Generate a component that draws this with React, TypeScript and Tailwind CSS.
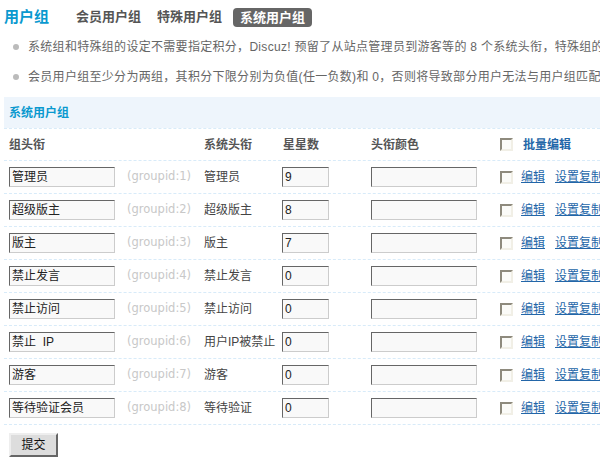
const groups = [
  { title: "管理员", id: 1, sys: "管理员", stars: "9" },
  { title: "超级版主", id: 2, sys: "超级版主", stars: "8" },
  { title: "版主", id: 3, sys: "版主", stars: "7" },
  { title: "禁止发言", id: 4, sys: "禁止发言", stars: "0" },
  { title: "禁止访问", id: 5, sys: "禁止访问", stars: "0" },
  { title: "禁止  IP", id: 6, sys: "用户IP被禁止", stars: "0" },
  { title: "游客", id: 7, sys: "游客", stars: "0" },
  { title: "等待验证会员", id: 8, sys: "等待验证", stars: "0" },
];

const font = "font-['Liberation_Sans','Noto_Sans_CJK_SC',sans-serif]";

function Field({ value, w }: { value: string; w: string }) {
  return (
    <div
      className={`${w} h-[20px] border border-t-[#666] border-l-[#666] border-r-[#ccc] border-b-[#ccc] bg-[#f9f9f9] pl-[2px] text-[12px] leading-[18px] text-[#222] whitespace-pre`}
    >
      {value}
    </div>
  );
}

function Check() {
  return (
    <div className="w-[13px] h-[13px] border-2 border-t-[#8e8a7d] border-l-[#8e8a7d] border-r-[#f1efe6] border-b-[#f1efe6] bg-[#fbfbf8]" />
  );
}

export default function App() {
  return (
    <div className={`w-[600px] h-[460px] overflow-hidden bg-white ${font} whitespace-nowrap`}>
      {/* title + tabs */}
      <div className="flex items-center h-[34px] pl-[4px]">
        <h1 className="text-[15px] font-bold text-[#0a99cf] w-[72px]">用户组</h1>
        <div className="flex items-center gap-[16px] text-[13px] font-bold text-[#555]">
          <span>会员用户组</span>
          <span>特殊用户组</span>
          <span className="bg-[#666] text-white rounded-[4px] px-[7px] h-[19px] leading-[19px] -ml-[5px]">系统用户组</span>
        </div>
      </div>

      {/* tips */}
      <ul className="text-[12px] text-[#666] pl-[13px] mt-[1px] tracking-[0.3px]">
        <li className="flex items-center h-[24px] gap-[9px]">
          <span className="w-[6px] h-[6px] rounded-full bg-[#bbb] shrink-0" />
          <span>系统组和特殊组的设定不需要指定积分，Discuz! 预留了从站点管理员到游客等的 8 个系统头衔，特殊组的设定</span>
        </li>
        <li className="flex items-center h-[24px] gap-[9px] mt-[6px]">
          <span className="w-[6px] h-[6px] rounded-full bg-[#bbb] shrink-0" />
          <span>会员用户组至少分为两组，其积分下限分别为负值(任一负数)和 0，否则将导致部分用户无法与用户组匹配的情况</span>
        </li>
      </ul>

      {/* table */}
      <div className="ml-[4px] mt-[8px]">
        <div className="h-[31px] bg-[#eef5fc] flex items-center pl-[5px] text-[12px] font-bold text-[#0a99cf]">
          系统用户组
        </div>
        <div className="flex items-center h-[33px] border-y border-dashed border-[#d8ebf9] pl-[5px] text-[12px] font-bold text-[#555]">
          <span className="w-[195px] shrink-0">组头衔</span>
          <span className="w-[79px] shrink-0">系统头衔</span>
          <span className="w-[88px] shrink-0">星星数</span>
          <span className="w-[129px] shrink-0">头衔颜色</span>
          <span className="w-[22px] shrink-0 flex"><Check /></span>
          <span className="text-[#2366a8] ml-[1px] shrink-0">批量编辑</span>
        </div>
        {groups.map((g) => (
          <div
            key={g.id}
            className="flex items-center h-[33px] border-b border-dashed border-[#d8ebf9] pl-[5px] text-[12px]"
          >
            <div className="w-[118px] shrink-0">
              <Field value={g.title} w="w-[106px]" />
            </div>
            <span className="w-[77px] shrink-0 text-[#c8c8c8] font-['DejaVu_Sans',sans-serif] text-[11.5px]">(groupid:{g.id})</span>
            <span className="w-[78px] shrink-0 text-[#444] overflow-hidden">{g.sys}</span>
            <div className="w-[89px] shrink-0">
              <Field value={g.stars} w="w-[47px]" />
            </div>
            <div className="w-[129px] shrink-0">
              <Field value="" w="w-[106px]" />
            </div>
            <span className="w-[21px] shrink-0 flex"><Check /></span>
            <a className="text-[#2366a8] underline shrink-0">编辑</a>
            <a className="text-[#2366a8] underline ml-[10px] shrink-0">设置复制</a>
          </div>
        ))}
        <button className="mt-[8px] ml-[5px] w-[49px] h-[24px] bg-[#ddd] border-2 border-t-[#eee] border-l-[#eee] border-r-[#666] border-b-[#666] text-[12px] text-[#111]">
          提交
        </button>
      </div>
    </div>
  );
}
